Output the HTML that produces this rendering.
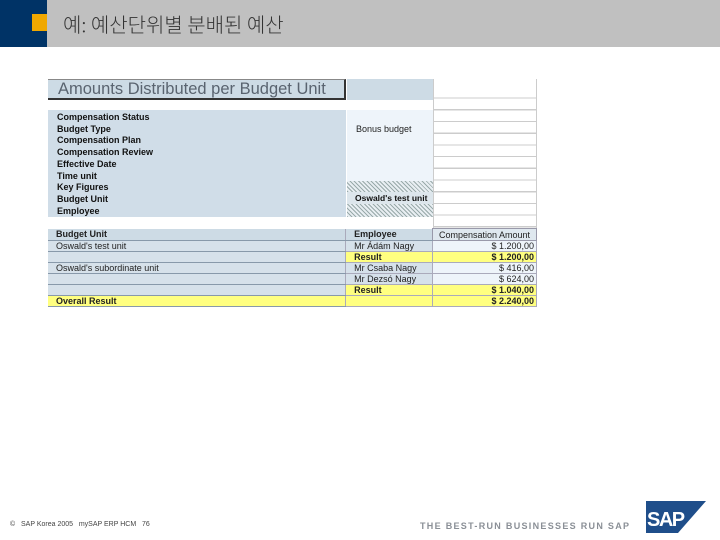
<!DOCTYPE html>
<html><head><meta charset="utf-8"><style>
*{margin:0;padding:0;box-sizing:border-box}
body{width:720px;height:540px;background:#fff;position:relative;overflow:hidden;font-family:"Liberation Sans",Arial,sans-serif}
.a{position:absolute}
.t{font-size:9px;line-height:11px;color:#222}
.b{font-weight:bold;color:#111}
</style></head><body>
<div class="a" style="left:0;top:0;width:47px;height:47px;background:#003366"></div>
<div class="a" style="left:47px;top:0;width:673px;height:47px;background:#c0c0c0"></div>
<div class="a" style="left:32px;top:14px;width:15px;height:17px;background:#f0a800"></div>
<div class="a" style="left:63px;top:9px;font-size:20px;color:#333;font-weight:300;font-family:'Noto Sans CJK KR','NanumGothic',sans-serif">예: 예산단위별 분배된 예산</div>

<div class="a" style="left:48px;top:79px;width:298px;height:21px;background:#cddbe5;border-right:2px solid #333;border-bottom:2px solid #333;border-top:1px solid #888"></div>
<div class="a" style="left:58px;top:80px;font-size:16.5px;color:#5a6470">Amounts Distributed per Budget Unit</div>
<div class="a" style="left:347px;top:79px;width:86px;height:21px;background:#cddbe5"></div>
<div class="a" style="left:433px;top:79px;width:104px;height:150px;border-left:1px solid #ccc;border-right:1px solid #ccc;background:repeating-linear-gradient(180deg,transparent 0 10.5px,#ccc 10.5px 11.7px);background-position:0 8px"></div>

<div class="a" style="left:48px;top:110px;width:298px;height:107px;background:#d0dde8"></div>
<div class="a" style="left:347px;top:110px;width:86px;height:71px;background:#eef4fa"></div>
<div class="a" style="left:347px;top:181px;width:86px;height:36px;background:repeating-linear-gradient(45deg,#9aa 0 1px,#e8eef2 1px 3px)"></div>
<div class="a" style="left:347px;top:192px;width:86px;height:12px;background:#dde6ec"></div>
<div class="a t b" style="left:57px;top:112px;line-height:11.7px">Compensation Status<br>Budget Type<br>Compensation Plan<br>Compensation Review<br>Effective Date<br>Time unit<br>Key Figures<br>Budget Unit<br>Employee</div>
<div class="a t" style="left:356px;top:124px">Bonus budget</div>
<div class="a t b" style="left:355px;top:193px;font-size:8.5px">Oswald's test unit</div>

<div class="a" style="left:48px;top:228px;width:489px;height:81px">
<table style="border-collapse:collapse;width:489px;font-size:9px;color:#222" cellspacing="0">
<colgroup><col style="width:298px"><col style="width:87px"><col style="width:104px"></colgroup>
<tr style="height:12px"><td style="background:#cddbe5;padding-left:8px;font-weight:bold;border-bottom:1px solid #8899aa">Budget Unit</td><td style="background:#cddbe5;padding-left:8px;font-weight:bold;border-left:1px solid #aab;border-bottom:1px solid #8899aa">Employee</td><td style="background:#dfe8ef;text-align:center;border:1px solid #99a">Compensation Amount</td></tr>
<tr style="height:11px"><td style="background:#d6e1ea;padding-left:8px;border-bottom:1px solid #8899aa">Oswald's test unit</td><td style="background:#d6e1ea;padding-left:8px;border-left:1px solid #aab;border-bottom:1px solid #aab">Mr Ádám Nagy</td><td style="background:#eef4fa;text-align:right;padding-right:2px;border:1px solid #aab">$ 1.200,00</td></tr>
<tr style="height:11px"><td style="background:#d6e1ea;border-bottom:1px solid #8899aa"></td><td style="background:#ffff80;padding-left:8px;font-weight:bold;border:1px solid #aab">Result</td><td style="background:#ffff80;text-align:right;padding-right:2px;font-weight:bold;border:1px solid #aab">$ 1.200,00</td></tr>
<tr style="height:11px"><td style="background:#d6e1ea;padding-left:8px;border-bottom:1px solid #8899aa">Oswald's subordinate unit</td><td style="background:#d6e1ea;padding-left:8px;border-left:1px solid #aab;border-bottom:1px solid #aab">Mr Csaba Nagy</td><td style="background:#eef4fa;text-align:right;padding-right:2px;border:1px solid #aab">$ 416,00</td></tr>
<tr style="height:11px"><td style="background:#d6e1ea;border-bottom:1px solid #8899aa"></td><td style="background:#d6e1ea;padding-left:8px;border-left:1px solid #aab;border-bottom:1px solid #aab">Mr Dezsó Nagy</td><td style="background:#eef4fa;text-align:right;padding-right:2px;border:1px solid #aab">$ 624,00</td></tr>
<tr style="height:11px"><td style="background:#d6e1ea;border-bottom:1px solid #8899aa"></td><td style="background:#ffff80;padding-left:8px;font-weight:bold;border:1px solid #aab">Result</td><td style="background:#ffff80;text-align:right;padding-right:2px;font-weight:bold;border:1px solid #aab">$ 1.040,00</td></tr>
<tr style="height:11px"><td style="background:#ffff80;padding-left:8px;font-weight:bold;border-bottom:1px solid #8899aa">Overall Result</td><td style="background:#ffff80;border:1px solid #aab"></td><td style="background:#ffff80;text-align:right;padding-right:2px;font-weight:bold;border:1px solid #aab">$ 2.240,00</td></tr>
</table></div>

<div class="a" style="left:10px;top:521px;font-size:7px;color:#444">©&nbsp;&nbsp; SAP Korea 2005&nbsp;&nbsp; mySAP ERP HCM&nbsp;&nbsp; 76</div>
<div class="a" style="left:420px;top:521px;font-size:9px;font-weight:bold;color:#8a8f96;letter-spacing:1.3px">THE BEST-RUN BUSINESSES RUN SAP</div>
<svg class="a" style="left:644px;top:500px" width="64" height="34" viewBox="0 0 64 34">
<polygon points="2,1 62,1 34,33 2,33" fill="#1f4e8a"/>
<text x="3" y="26" font-family="Liberation Sans,sans-serif" font-weight="bold" font-size="20" fill="#fff" letter-spacing="-1.5">SAP</text>
</svg>
</body></html>
